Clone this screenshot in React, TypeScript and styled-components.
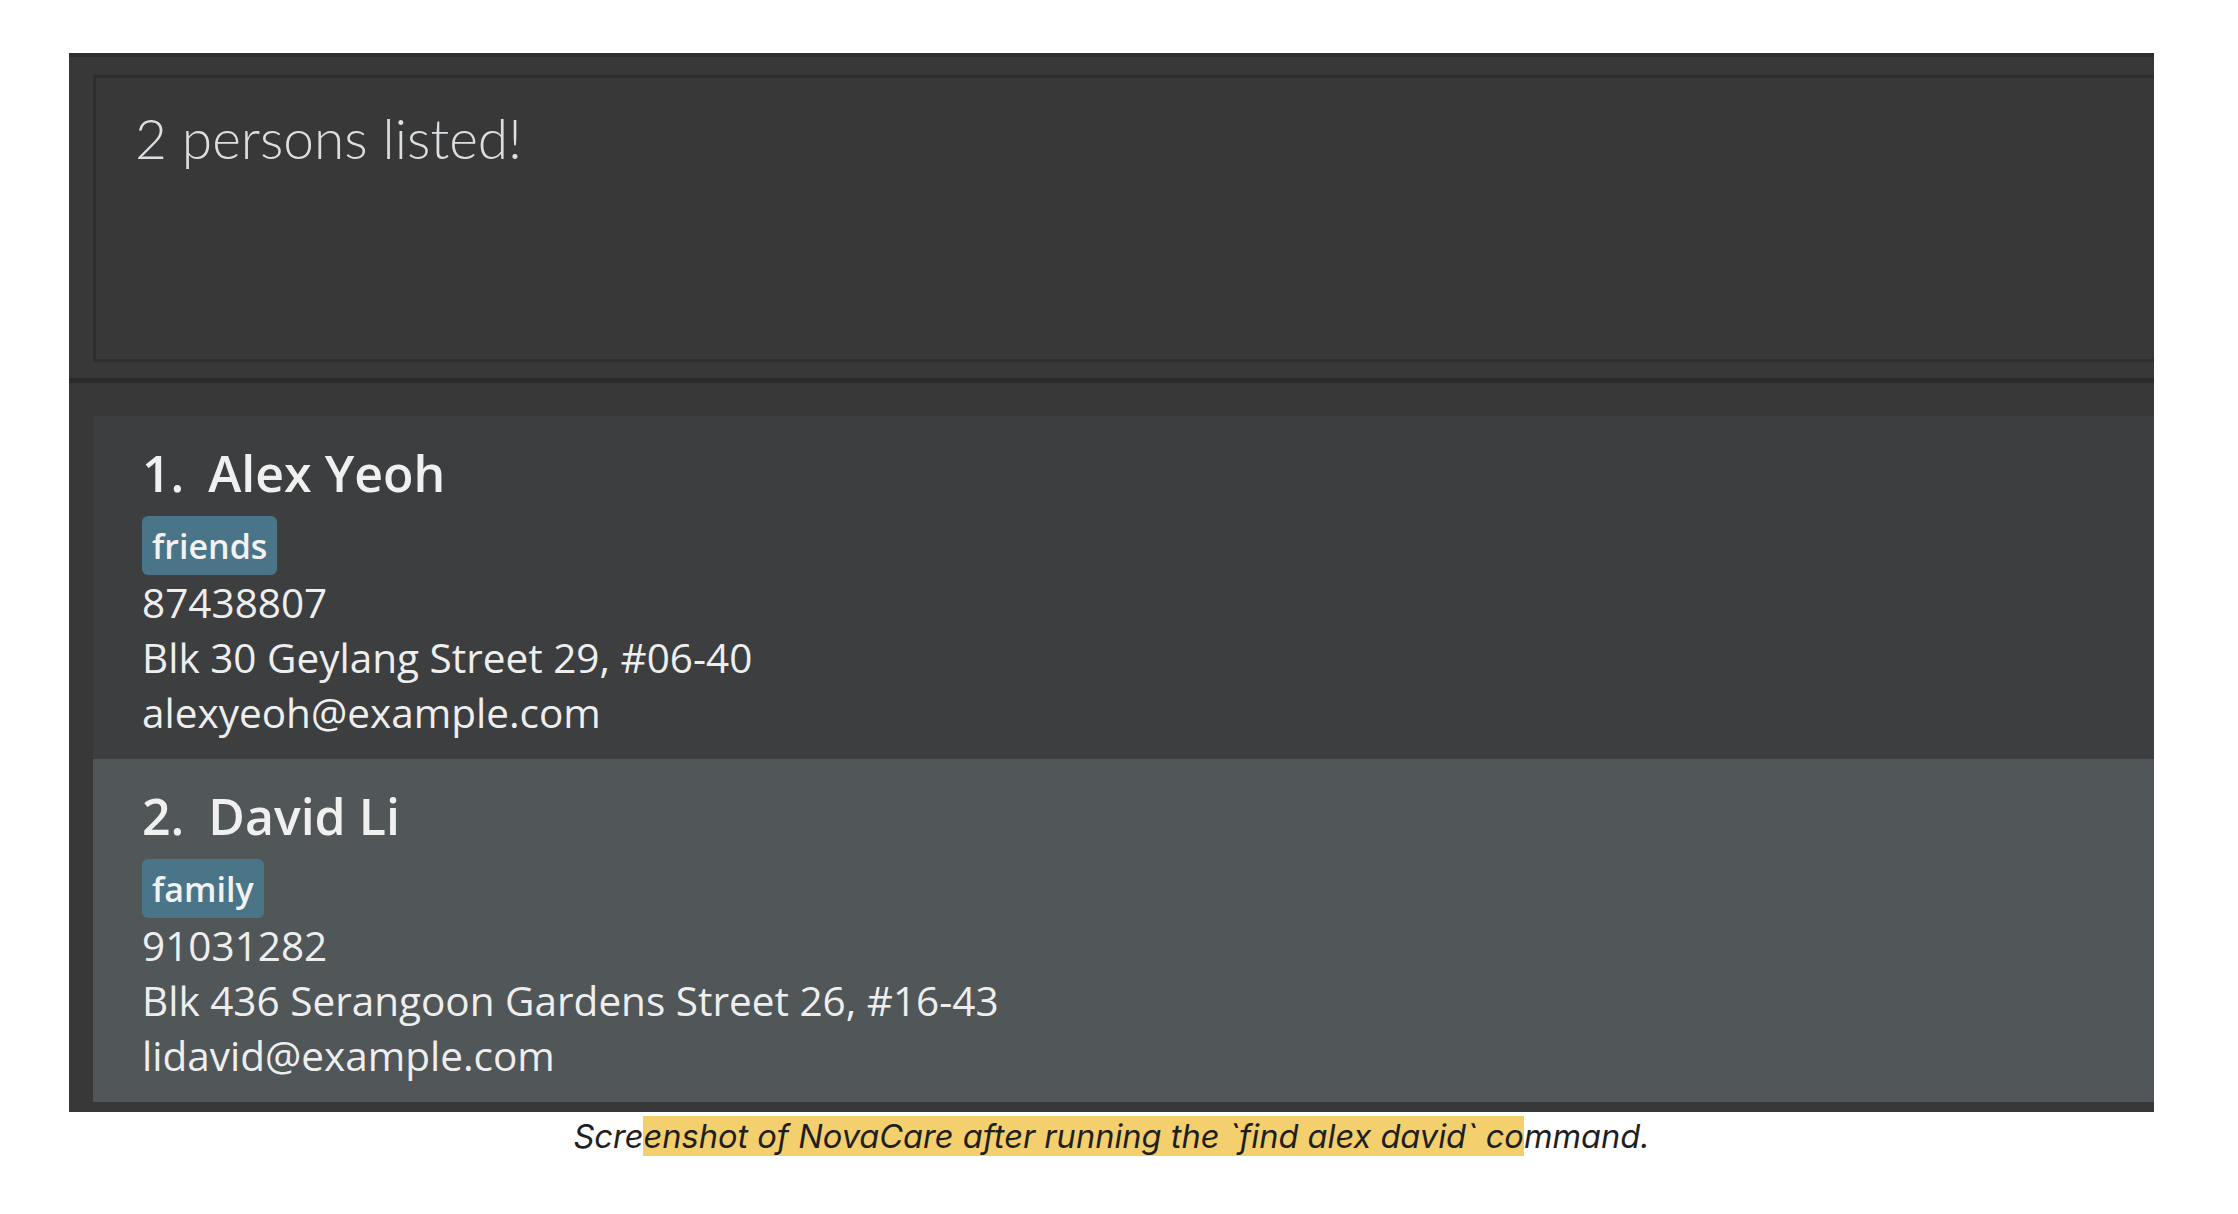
import React from "react";
import styled, { createGlobalStyle } from "styled-components";

const GlobalStyle = createGlobalStyle`
  html, body {
    margin: 0;
    padding: 0;
    background: #ffffff;
  }
  body {
    font-family: "Open Sans", "Liberation Sans", sans-serif;
  }
`;

const Page = styled.div`
  padding: 53px 0 0 69px;
  width: 2085px;
`;

const Figure = styled.figure`
  margin: 0;
  display: flex;
  flex-direction: column;
`;

const Window = styled.div`
  display: flex;
  flex-direction: column;
  height: 1059px;
  background: #383838;
  border-top: 4px solid #2d2d2d;
  box-sizing: border-box;
  overflow: hidden;
`;

const ResultSection = styled.section`
  padding: 18px 0 16px 24px;
`;

const ResultBox = styled.div`
  height: 287px;
  box-sizing: border-box;
  border: 3px solid #2e2e2e;
  border-right: none;
  background: #383838;
  padding: 27px 0 0 39px;
`;

const ResultText = styled.div`
  font-family: "Lato", "Open Sans", sans-serif;
  font-weight: 300;
  font-size: 55px;
  line-height: 66px;
  color: #dcdfe2;
`;

const Divider = styled.div`
  height: 5px;
  background: #2b2b2b;
`;

const List = styled.section`
  display: flex;
  flex-direction: column;
  padding: 33px 0 10px 24px;
`;

const Card = styled.div<{ $alt?: boolean }>`
  height: 343px;
  box-sizing: border-box;
  padding: 27px 0 19px 49px;
  background: ${(p) => (p.$alt ? "#515658" : "#3c3e3f")};
  color: #eeeeee;
  display: flex;
  flex-direction: column;
  align-items: flex-start;
`;

const NameRow = styled.div`
  display: flex;
  gap: 24px;
  font-family: "Open Sans", sans-serif;
  font-weight: 600;
  font-size: 50px;
  line-height: 60px;
  color: #f0f0f0;
`;

const Tags = styled.div`
  display: flex;
  gap: 8px;
  margin-top: 13px;
`;

const Tag = styled.span`
  display: inline-flex;
  align-items: center;
  height: 59px;
  box-sizing: border-box;
  padding: 0 10px;
  border-radius: 6px;
  background: #4a7588;
  font-family: "Open Sans", sans-serif;
  font-weight: 600;
  font-size: 34px;
  color: #f2f2f2;
`;

const Detail = styled.div`
  font-family: "Open Sans", sans-serif;
  font-size: 40.5px;
  line-height: 55px;
  color: #eeeeee;
`;

const Caption = styled.figcaption`
  margin-top: 4px;
  text-align: center;
  font-family: "Inter", "Liberation Sans", sans-serif;
  font-style: italic;
  font-size: 32.6px;
  line-height: 40px;
  color: #1f1f1f;
`;

const Highlight = styled.span`
  background: #f3cf6e;
`;

type Person = {
  name: string;
  tags: string[];
  phone: string;
  address: string;
  email: string;
};

const persons: Person[] = [
  {
    name: "Alex Yeoh",
    tags: ["friends"],
    phone: "87438807",
    address: "Blk 30 Geylang Street 29, #06-40",
    email: "alexyeoh@example.com",
  },
  {
    name: "David Li",
    tags: ["family"],
    phone: "91031282",
    address: "Blk 436 Serangoon Gardens Street 26, #16-43",
    email: "lidavid@example.com",
  },
];

export default function App() {
  return (
    <>
      <GlobalStyle />
      <Page>
        <Figure>
          <Window>
            <ResultSection>
              <ResultBox>
                <ResultText>2 persons listed!</ResultText>
              </ResultBox>
            </ResultSection>
            <Divider />
            <List>
              {persons.map((p, i) => (
                <Card key={p.name} $alt={i % 2 === 1}>
                  <NameRow>
                    <span>{i + 1}.</span>
                    <span>{p.name}</span>
                  </NameRow>
                  <Tags>
                    {p.tags.map((t) => (
                      <Tag key={t}>{t}</Tag>
                    ))}
                  </Tags>
                  <Detail>{p.phone}</Detail>
                  <Detail>{p.address}</Detail>
                  <Detail>{p.email}</Detail>
                </Card>
              ))}
            </List>
          </Window>
          <Caption>
            Scre
            <Highlight>enshot of NovaCare after running the `find alex david` co</Highlight>
            mmand.
          </Caption>
        </Figure>
      </Page>
    </>
  );
}
